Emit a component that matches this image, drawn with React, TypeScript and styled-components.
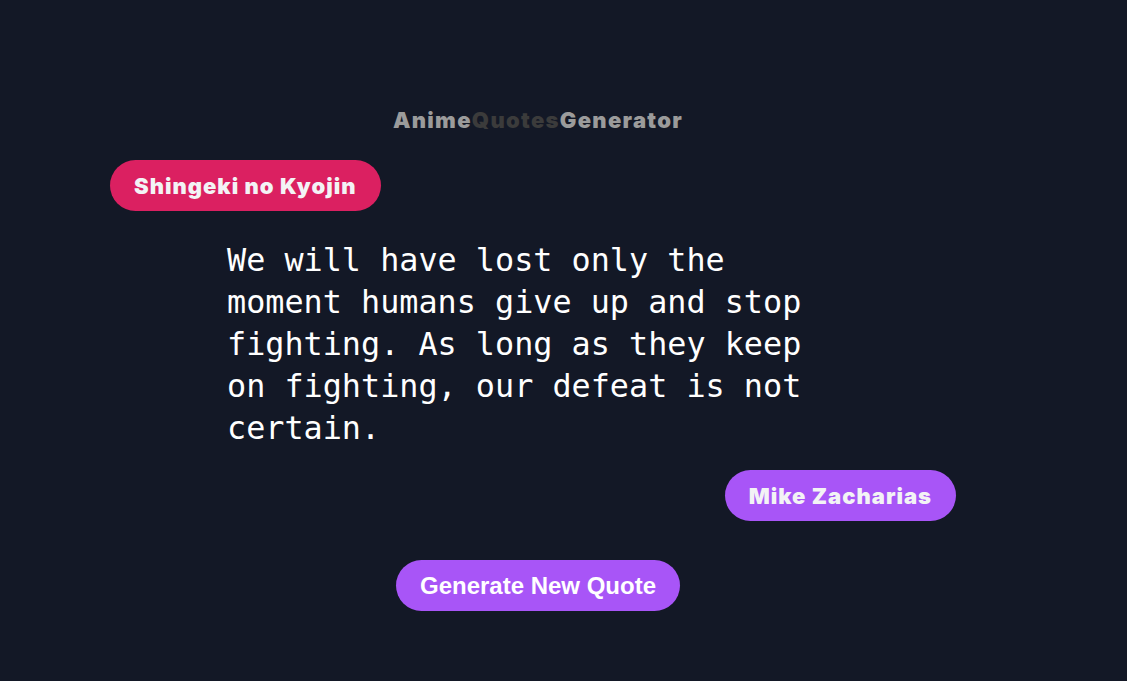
import styled, { createGlobalStyle } from "styled-components";

const GlobalStyle = createGlobalStyle`
  html, body {
    margin: 0;
    padding: 0;
    background: #131826;
    min-height: 100%;
  }
  #root {
    min-height: 681px;
  }
`;

const Page = styled.main`
  min-height: 681px;
  background: #131826;
  padding-top: 106px;
  box-sizing: border-box;
`;

const Container = styled.div`
  width: 856px;
  margin-left: 110px;
  display: flex;
  flex-direction: column;
`;

const Title = styled.h1`
  margin: 0;
  align-self: center;
  font-family: Inter, "Noto Sans", sans-serif;
  font-weight: 900;
  font-size: 22px;
  line-height: 28px;
  color: #9b9b9b;
  letter-spacing: 1.3px;
`;

const Dim = styled.span`
  color: #3b3b3b;
`;

const Tag = styled.span<{ $bg: string }>`
  display: inline-flex;
  align-items: center;
  height: 51px;
  padding: 0 24px;
  border-radius: 26px;
  background: ${(p) => p.$bg};
  color: #f3f3f5;
  font-family: Inter, "Noto Sans", sans-serif;
  font-weight: 900;
  font-size: 22px;
  letter-spacing: 1px;
  box-sizing: border-box;
`;

const AnimeRow = styled.div`
  display: flex;
  margin-top: 26px;
`;

const CharacterRow = styled.div`
  display: flex;
  justify-content: flex-end;
  margin-top: 21px;
  padding-right: 10px;
`;

const Quote = styled.p`
  margin: 28px 0 0 117px;
  width: 600px;
  font-family: "DejaVu Sans Mono", "Liberation Mono", monospace;
  font-size: 31.8px;
  line-height: 42px;
  color: #ffffff;
`;

const Button = styled.button`
  align-self: center;
  margin-top: 39px;
  height: 51px;
  padding: 0 24px;
  border: none;
  border-radius: 26px;
  background: #a855f7;
  color: #ffffff;
  font-family: "Liberation Sans", Arial, sans-serif;
  font-weight: 700;
  font-size: 24px;
  cursor: pointer;
`;

export default function App(): JSX.Element {
  return (
    <Page>
      <GlobalStyle />
      <Container>
        <Title>
          Anime<Dim>Quotes</Dim>Generator
        </Title>
        <AnimeRow>
          <Tag $bg="#db2061">Shingeki no Kyojin</Tag>
        </AnimeRow>
        <Quote>
          We will have lost only the moment humans give up and stop fighting. As long as they keep on
          fighting, our defeat is not certain.
        </Quote>
        <CharacterRow>
          <Tag $bg="#a855f7">Mike Zacharias</Tag>
        </CharacterRow>
        <Button>Generate New Quote</Button>
      </Container>
    </Page>
  );
}
